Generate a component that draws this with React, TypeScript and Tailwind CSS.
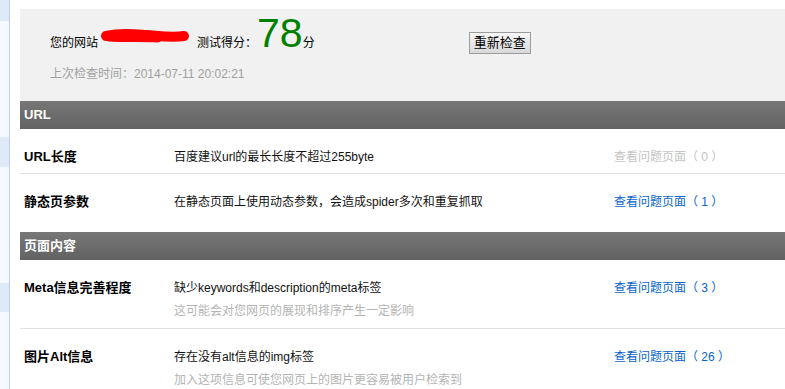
type Check = {
  label: string
  desc: string
  hint?: string
  count: number
  height: string
  border?: boolean
}

const urlChecks: Check[] = [
  { label: 'URL长度', desc: '百度建议url的最长长度不超过255byte', count: 0, height: 'h-[45px]', border: true },
  { label: '静态页参数', desc: '在静态页面上使用动态参数，会造成spider多次和重复抓取', count: 1, height: 'h-[58px]' },
]

const contentChecks: Check[] = [
  {
    label: 'Meta信息完善程度',
    desc: '缺少keywords和description的meta标签',
    hint: '这可能会对您网页的展现和排序产生一定影响',
    count: 3,
    height: 'h-[69px]',
    border: true,
  },
  {
    label: '图片Alt信息',
    desc: '存在没有alt信息的img标签',
    hint: '加入这项信息可使您网页上的图片更容易被用户检索到',
    count: 26,
    height: 'h-[69px]',
  },
]

function SectionHeader({ title }: { title: string }) {
  return (
    <div className="h-[28px] flex items-center pl-1 bg-gradient-to-b from-[#777777] to-[#626262] text-white text-[13px] font-bold">
      {title}
    </div>
  )
}

function CheckRow({ check }: { check: Check }) {
  const empty = check.count === 0
  return (
    <div className={`${check.height} flex items-start pt-[20px] pl-1 ${check.border ? 'border-b border-[#e2e2e2]' : ''}`}>
      <div className="w-[150px] shrink-0 text-[13px] leading-4 font-bold text-black">{check.label}</div>
      <div className="w-[440px] shrink-0 text-[12px] leading-4">
        <p className="text-[#111]">{check.desc}</p>
        {check.hint && <p className="mt-[7px] text-[#b4b4b4]">{check.hint}</p>}
      </div>
      <a className={`text-[12px] leading-4 ${empty ? 'text-[#c4c4c4]' : 'text-[#0a64c8]'}`}>
        查看问题页面（ {check.count} ）
      </a>
    </div>
  )
}

function Redaction() {
  return (
    <svg width="90" height="14" viewBox="0 0 90 14" className="ml-[2px] self-center mt-[6px]">
      <path d="M6 7 C20 4, 32 5, 46 6 S72 9, 84 7" stroke="#ff0000" strokeWidth="10" strokeLinecap="round" fill="none" />
      <path d="M9 8 C25 9, 42 8, 58 9" stroke="#ff0000" strokeWidth="9" strokeLinecap="round" fill="none" />
    </svg>
  )
}

export default function App() {
  return (
    <div className="flex h-[389px] overflow-hidden bg-white font-['Liberation_Sans','Noto_Sans_CJK_SC',sans-serif]">
      {/* Left nav strip */}
      <div className="w-[10px] shrink-0 flex flex-col bg-[#f6f9fe] border-r border-[#bccdf0]">
        <div className="h-[21px] bg-[#dfeaf8]" />
        <div className="h-[116px]" />
        <div className="h-[30px] bg-[#dfeaf8]" />
        <div className="h-[116px]" />
        <div className="h-[29px] bg-[#dfeaf8]" />
      </div>

      <div className="flex-1 min-w-0 ml-[10px] pt-[9px]">
        {/* Score summary */}
        <div className="h-[92px] bg-[#f1f1f1] pl-[30px] pt-[4px]">
          <div className="h-[40px] flex items-baseline text-[12px] text-black">
            <span>您的网站</span>
            <Redaction />
            <span className="ml-[7px]">测试得分：</span>
            <span className="text-[41px] leading-[40px] text-[#008000]">78</span>
            <span>分</span>
            <button className="ml-[154px] w-[62px] h-[22px] border border-[#9c9c9c] bg-gradient-to-b from-[#f7f7f7] to-[#d9d9d9] text-[13px] text-black">
              重新检查
            </button>
          </div>
          <p className="mt-[13px] text-[12px] leading-4 text-[#a0a0a0]">上次检查时间：2014-07-11 20:02:21</p>
        </div>

        <SectionHeader title="URL" />
        {urlChecks.map((c) => (
          <CheckRow key={c.label} check={c} />
        ))}

        <SectionHeader title="页面内容" />
        {contentChecks.map((c) => (
          <CheckRow key={c.label} check={c} />
        ))}
      </div>
    </div>
  )
}
